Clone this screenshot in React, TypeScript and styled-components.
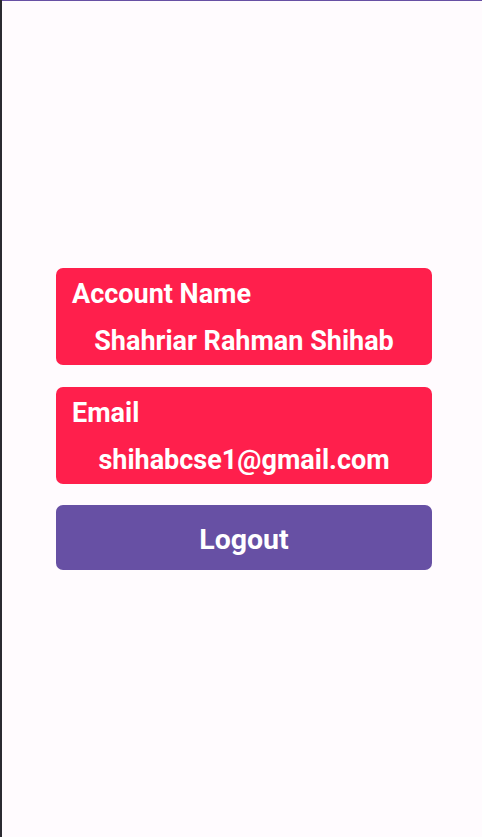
import React from "react";
import styled, { createGlobalStyle } from "styled-components";

const Global = createGlobalStyle`
  html, body { margin: 0; padding: 0; background: #fffbfe; }
  body { font-family: Roboto, "Liberation Sans", sans-serif; }
`;

const Screen = styled.div`
  width: 482px;
  height: 837px;
  display: flex;
  box-sizing: border-box;
  overflow: hidden;
`;

const EdgeStrip = styled.div`
  width: 2px;
  flex: none;
  background: #2b2a31;
`;

const Main = styled.div`
  flex: 1;
  border-top: 1px solid #6750a4;
  background: #fffbfe;
  display: flex;
  flex-direction: column;
  padding: 267px 50px 0 54px;
`;

const Card = styled.div`
  background: #ff1f4c;
  border-radius: 7px;
  height: 97px;
  box-sizing: border-box;
  padding: 10px 16px 0 16px;
  display: flex;
  flex-direction: column;
  color: #fff;
  margin-bottom: 22px;
  &:nth-of-type(2) { margin-bottom: 21px; }
`;

const Label = styled.div`
  font-size: 27px;
  font-weight: 700;
  line-height: 32px;
`;

const Value = styled.div`
  font-size: 27px;
  font-weight: 700;
  line-height: 32px;
  margin-top: 15px;
  text-align: center;
`;

const LogoutButton = styled.button`
  height: 65px;
  border: none;
  border-radius: 7px;
  background: #6750a4;
  color: #fff;
  font-family: Roboto, "Liberation Sans", sans-serif;
  font-size: 28.5px;
  font-weight: 700;
  padding: 3px 0 0 0;
  cursor: pointer;
`;

export default function App() {
  return (
    <>
      <Global />
      <Screen>
        <EdgeStrip />
        <Main>
          <Card>
            <Label>Account Name</Label>
            <Value>Shahriar Rahman Shihab</Value>
          </Card>
          <Card>
            <Label>Email</Label>
            <Value>shihabcse1@gmail.com</Value>
          </Card>
          <LogoutButton>Logout</LogoutButton>
        </Main>
      </Screen>
    </>
  );
}
